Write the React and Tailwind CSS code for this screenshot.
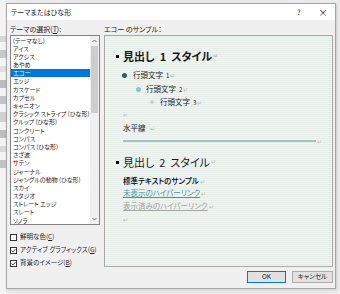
import React from 'react'

const themes = [
  '(テーマなし)', 'アイス', 'アクシス', 'あやめ', 'エコー', 'エッジ', 'カスケード', 'カプセル', 'キャニオン',
  'クラシック ストライプ (ひな形)', 'クルップ (ひな形)', 'コンクリート', 'コンパス', 'コンパス (ひな形)',
  'さざ波', 'サテン', 'ジャーナル', 'ジャングルの動物 (ひな形)', 'スカイ', 'スタジオ', 'ストレート エッジ',
  'スレート', 'ソノラ',
]

function Ret() {
  return <span className="text-[#b8b8b8] text-[6px] ml-[1px]">↵</span>
}

function Check({ checked }) {
  return (
    <span className="w-[7px] h-[7px] border border-[#333] bg-white flex items-center justify-center">
      {checked && (
        <svg width="5" height="5" viewBox="0 0 10 10">
          <path d="M1 5 L4 8 L9 2" stroke="#222" strokeWidth="1.6" fill="none" />
        </svg>
      )}
    </span>
  )
}

function Label({ text, letter, rest }) {
  return (
    <span>
      {text}(<span className="underline">{letter}</span>){rest}
    </span>
  )
}

export default function App() {
  return (
    <div className="w-[340px] h-[294px] bg-[#ececec] flex overflow-hidden [font-family:'Noto_Sans_CJK_JP','Noto_Sans',sans-serif] [font-feature-settings:'palt'] text-[#1a1a1a]">
      {/* background app strip */}
      <div className="w-[6px] flex flex-col pt-[36px] gap-[8px] bg-[#f4f4f4]">
        <div className="h-[6px] bg-[#d6d6d6]" />
        <div className="h-[8px] bg-[#c9c9c9]" />
        <div className="h-[6px] bg-[#e0e0e0]" />
        <div className="h-[8px] bg-[#bdbdbd]" />
        <div className="h-[8px] bg-[#c4c4c4]" />
        <div className="h-[10px] bg-[#d2d2d2]" />
        <div className="h-[8px] bg-[#bdbdbd]" />
        <div className="h-[6px] bg-[#d8d8d8]" />
        <div className="h-[8px] bg-[#c2c2c2]" />
      </div>

      <div className="mt-[3px] w-[330px] h-[286px] border border-[#a6a6a6] flex flex-col bg-[#f0f0f0] shadow-[1px_1px_3px_rgba(0,0,0,0.15)]">
        {/* title bar */}
        <div className="h-[16px] bg-white flex items-center pl-[4px] text-[7px]">
          <span>テーマまたはひな形</span>
          <span className="ml-auto w-[24px] text-center text-[7px]">?</span>
          <span className="w-[24px] text-center text-[9px] leading-none">×</span>
        </div>

        {/* body */}
        <div className="flex-1 flex pl-[3px] pr-[2px] pt-[5px] gap-[4px] text-[7px]">
          {/* left */}
          <div className="w-[90px] flex flex-col">
            <div className="h-[9px] leading-[9px] mb-[1px]">
              <Label text="テーマの選択" letter="T" rest=":" />
            </div>
            <div className="h-[190px] border border-[#828282] bg-white flex">
              <div className="flex-1 flex flex-col pt-[0.5px]">
                {themes.map((t) => (
                  <div
                    key={t}
                    className={
                      t === 'エコー'
                        ? 'h-[8.2px] leading-[8.2px] pl-[2px] text-[6px] bg-[#0078d7] text-white whitespace-nowrap'
                        : 'h-[8.2px] leading-[8.2px] pl-[2px] text-[6px] whitespace-nowrap'
                    }
                  >
                    {t}
                  </div>
                ))}
              </div>
              <div className="w-[9px] bg-[#f0f0f0] flex flex-col items-center">
                <div className="h-[10px] flex items-center justify-center">
                  <svg width="5" height="4" viewBox="0 0 10 6">
                    <path d="M1 5 L5 1 L9 5" stroke="#606060" strokeWidth="1.5" fill="none" />
                  </svg>
                </div>
                <div className="w-[7px] h-[67px] bg-[#cdcdcd]" />
                <div className="flex-1" />
                <div className="h-[10px] flex items-center justify-center">
                  <svg width="5" height="4" viewBox="0 0 10 6">
                    <path d="M1 1 L5 5 L9 1" stroke="#606060" strokeWidth="1.5" fill="none" />
                  </svg>
                </div>
              </div>
            </div>
            <div className="mt-[8px] flex flex-col gap-[5px] text-[6.5px]">
              <div className="h-[8px] flex items-center gap-[3px]">
                <Check />
                <Label text="鮮明な色" letter="C" />
              </div>
              <div className="h-[8px] flex items-center gap-[3px]">
                <Check checked />
                <Label text="アクティブ グラフィックス" letter="G" />
              </div>
              <div className="h-[8px] flex items-center gap-[3px]">
                <Check checked />
                <Label text="背景のイメージ" letter="B" />
              </div>
            </div>
          </div>

          {/* right */}
          <div className="flex-1 flex flex-col">
            <div className="h-[9px] leading-[9px] mb-[1px]">エコー のサンプル：</div>
            <div className="h-[232px] border border-[#a9a9a9] bg-[repeating-linear-gradient(0deg,#f1f5f2_0px,#f1f5f2_1px,#e7ede9_1px,#e7ede9_2px)] flex flex-col pl-[11px] text-[7.5px]">
              <div className="mt-[13px] h-[14px] leading-[14px] text-[11px] font-bold flex items-center">
                <span className="w-[3px] h-[3px] bg-black mr-[4px]" />
                見出し<span className="mx-[5px]">1</span>スタイル<Ret />
              </div>
              <div className="mt-[7px] h-[10px] flex items-center pl-[6px]">
                <span className="w-[5px] h-[5px] rounded-full bg-[#2f5e62] mr-[6px]" />
                行頭文字<span className="text-[6px] ml-[3px]">1</span><Ret />
              </div>
              <div className="mt-[4px] h-[10px] flex items-center pl-[20px]">
                <span className="w-[5px] h-[5px] rounded-full bg-[#8cc8c6] mr-[5px]" />
                行頭文字<span className="text-[6px] ml-[3px]">2</span><Ret />
              </div>
              <div className="mt-[3px] h-[10px] flex items-center pl-[34px]">
                <span className="w-[4px] h-[4px] rounded-full bg-[#cfcfcf] mr-[6px]" />
                行頭文字<span className="text-[6px] ml-[3px]">3</span><Ret />
              </div>
              <div className="mt-[2px] h-[10px] flex items-center pl-[6px]">
                <Ret />
              </div>
              <div className="mt-[4px] h-[10px] flex items-center pl-[7px]">
                水平線<span className="ml-[3px]" /><Ret />
              </div>
              <div className="mt-[5px] h-[6px] flex items-center pl-[7px]">
                <div className="w-[193px] h-[1.5px] bg-[#9fc4c1]" />
                <Ret />
              </div>
              <div className="mt-[11px] h-[14px] leading-[14px] text-[11px] flex items-center">
                <span className="w-[3px] h-[3px] bg-black mr-[4px]" />
                見出し<span className="mx-[5px]">2</span>スタイル<Ret />
              </div>
              <div className="mt-[7px] h-[10px] flex items-center pl-[7px] font-medium text-black">
                標準テキストのサンプル<Ret />
              </div>
              <div className="mt-[2px] h-[10px] flex items-center pl-[7px]">
                <span className="text-[#3a9fa3] underline">未表示のハイパーリンク</span><Ret />
              </div>
              <div className="mt-[3px] h-[10px] flex items-center pl-[7px]">
                <span className="text-[#a3a3a3] underline">表示済みのハイパーリンク</span><Ret />
              </div>
              <div className="mt-[3px] h-[10px] flex items-center pl-[6px]">
                <Ret />
              </div>
            </div>
            <div className="mt-[4px] flex justify-end gap-[6px] text-[6.5px]">
              <button className="w-[39px] h-[12px] bg-[#e1e1e1] border border-[#0078d7] flex items-center justify-center">
                OK
              </button>
              <button className="w-[41px] h-[12px] bg-[#e1e1e1] border border-[#adadad] flex items-center justify-center">
                キャンセル
              </button>
            </div>
          </div>
        </div>
      </div>
    </div>
  )
}
